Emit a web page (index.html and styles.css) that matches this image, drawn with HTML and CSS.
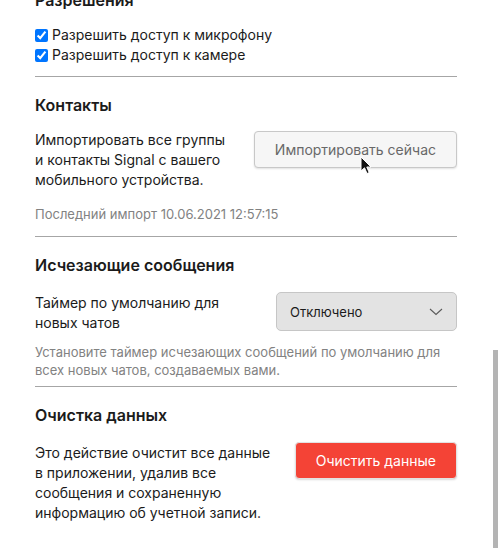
FILE: index.html
```html
<!DOCTYPE html>
<html lang="ru">
<head>
    <meta charset="UTF-8">
    <meta name="viewport" content="width=device-width, initial-scale=1.0">
    <title>Настройки</title>
    <link rel="stylesheet" href="styles.css">
</head>
<body>
    <div class="settings">
        <!-- Permissions -->
        <section class="section section-first">
            <h2 class="section-title">Разрешения</h2>
            <div class="checks">
                <label class="check"><input type="checkbox" checked> Разрешить доступ к микрофону</label>
                <label class="check"><input type="checkbox" checked> Разрешить доступ к камере</label>
            </div>
        </section>

        <!-- Contacts -->
        <section class="section section-contacts">
            <h2 class="section-title">Контакты</h2>
            <div class="row row-contacts">
                <div class="row-text">Импортировать все группы и контакты Signal с вашего мобильного устройства.</div>
                <button class="btn btn-secondary">
                    Импортировать сейчас
                    <svg class="cursor" width="13" height="19" viewBox="0 0 13 19">
                        <path d="M1 1 L1 15 L4.5 11.8 L7 17.5 L9.2 16.6 L6.8 11 L11 11 Z" fill="#111" stroke="#fff" stroke-width="1" stroke-linejoin="round"/>
                    </svg>
                </button>
            </div>
            <div class="note note-import">Последний импорт 10.06.2021 12:57:15</div>
        </section>

        <!-- Disappearing messages -->
        <section class="section section-timer">
            <h2 class="section-title">Исчезающие сообщения</h2>
            <div class="row">
                <div class="row-text">Таймер по умолчанию для новых чатов</div>
                <button class="select">
                    <span>Отключено</span>
                    <svg width="14" height="8" viewBox="0 0 14 8">
                        <path d="M1 1 L7 6.5 L13 1" fill="none" stroke="#5a5a5a" stroke-width="1.1"/>
                    </svg>
                </button>
            </div>
            <div class="note note-timer">Установите таймер исчезающих сообщений по умолчанию для всех новых чатов, создаваемых вами.</div>
        </section>

        <!-- Clear data -->
        <section class="section">
            <h2 class="section-title">Очистка данных</h2>
            <div class="row">
                <div class="row-text">Это действие очистит все данные в приложении, удалив все сообщения и сохраненную информацию об учетной записи.</div>
                <button class="btn btn-destructive">Очистить данные</button>
            </div>
        </section>
    </div>

    <div class="scroll-thumb"></div>
</body>
</html>
```

FILE: styles.css
```css
* {
    margin: 0;
    padding: 0;
    box-sizing: border-box;
}

body {
    font-family: Inter, "Noto Sans", sans-serif;
    font-size: 14px;
    line-height: 20px;
    color: #1b1b1b;
    background: #fff;
    overflow: hidden;
    height: 550px;
}

.settings {
    margin-top: -10px;
    padding: 0 43px 0 35px;
}

.section {
    border-top: 1px solid #a6a6a6;
    padding-top: 18px;
}

.section-first {
    border-top: none;
    padding-top: 0;
    padding-bottom: 11px;
}

.section-contacts {
    padding-bottom: 13px;
}

.section-timer {
    padding-bottom: 7px;
}

.section-title {
    font-size: 16px;
    line-height: 20px;
    font-weight: 600;
}

/* checkboxes */
.checks {
    margin-top: 15px;
}

.check {
    display: flex;
    align-items: center;
    gap: 4px;
}

.check input {
    width: 13px;
    height: 13px;
    margin: 0;
}

/* label + control rows */
.row {
    display: flex;
    align-items: flex-start;
    gap: 22px;
    margin-top: 17px;
}

.row-contacts {
    margin-top: 15px;
}

.row-text {
    flex: 1;
    padding-top: 1px;
}

.row-contacts .row-text {
    padding-top: 0;
}

.row-contacts .btn {
    margin-top: 1px;
}

.btn {
    position: relative;
    flex-shrink: 0;
    font-family: inherit;
    font-size: 14px;
    line-height: 19px;
    padding: 8px 20px;
    border-radius: 4px;
    cursor: pointer;
}

.btn-secondary {
    color: #686868;
    background: #f6f6f6;
    border: 1px solid #c8c8c8;
    box-shadow: 0 1px 2px rgba(0, 0, 0, 0.12);
}

.btn-destructive {
    color: #fff;
    background: #f44336;
    border: 1px solid #e2e2e2;
    box-shadow: 0 1px 2px rgba(0, 0, 0, 0.15);
}

.cursor {
    position: absolute;
    left: 105px;
    top: 24px;
}

.select {
    flex-shrink: 0;
    width: 181px;
    height: 39px;
    display: flex;
    align-items: center;
    justify-content: space-between;
    padding: 0 13px 0 13px;
    font-family: inherit;
    font-size: 13px;
    color: #1b1b1b;
    background: #e3e3e3;
    border: 1px solid #c6c6c6;
    border-radius: 5px;
}

.note {
    font-size: 13px;
    line-height: 18px;
    color: #828282;
}

.note-import {
    margin-top: 15px;
}

.note-timer {
    margin-top: 10px;
}

.scroll-thumb {
    position: fixed;
    left: 493px;
    top: 350px;
    width: 5px;
    height: 198px;
    background: #b4b4b4;
}
```
